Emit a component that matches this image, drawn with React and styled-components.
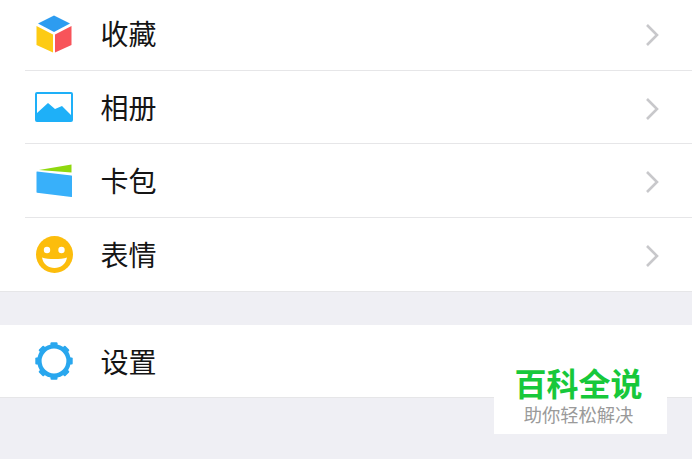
import React from 'react'
import styled, { createGlobalStyle } from 'styled-components'

const GlobalStyle = createGlobalStyle`
  html, body {
    margin: 0;
    padding: 0;
    background: #efeff4;
  }
  body {
    font-family: "Liberation Sans", "Noto Sans CJK SC", sans-serif;
  }
`

const Page = styled.div`
  position: relative;
  width: 692px;
  height: 459px;
  overflow: hidden;
  background: #efeff4;
`

const Group = styled.div`
  background: #fff;
  margin-top: ${(p) => p.$top || 0}px;
  border-bottom: 1px solid #e6e6e8;
`

const Row = styled.div`
  display: flex;
  align-items: center;
  height: ${(p) => p.$height}px;
  margin-left: 25px;
  box-sizing: border-box;
  border-bottom: ${(p) => (p.$last ? 'none' : '1px solid #e6e6e8')};
`

const IconBox = styled.div`
  width: 58px;
  height: 44px;
  display: flex;
  align-items: center;
  justify-content: center;
  flex-shrink: 0;
`

const Label = styled.span`
  margin-left: 17.5px;
  margin-top: 5px;
  font-size: 28px;
  line-height: 40px;
  color: #151515;
  flex: 1;
`

const Arrow = styled.svg`
  width: 16px;
  height: 26px;
  margin-top: 3px;
  margin-right: 32px;
`

const Watermark = styled.div`
  position: absolute;
  left: 494px;
  top: 365px;
  width: 173px;
  height: 69px;
  padding-right: 4px;
  box-sizing: border-box;
  background: #fff;
  display: flex;
  flex-direction: column;
  align-items: center;
`

const MarkTitle = styled.div`
  margin-top: 2px;
  font-size: 32px;
  line-height: 37px;
  font-weight: 700;
  color: #17c83a;
`

const MarkSub = styled.div`
  font-size: 18.3px;
  line-height: 24px;
  color: #9a9a9a;
`

const Chevron = () => (
  <Arrow viewBox="0 0 16 26">
    <path d="M3 3l10 10L3 23" fill="none" stroke="#c8c8cb" strokeWidth="2.6" />
  </Arrow>
)

const BoxIcon = () => (
  <svg width="36" height="38" viewBox="0 0 36 38">
    <path d="M18 0.500L34 8.500L18 17L2 8.500Z" fill="#2d9cf0" />
    <path d="M0.500 11L17 19.500V37.500L0.500 30Z" fill="#fdcb14" />
    <path d="M35.500 11L19 19.500V37.500L35.500 30Z" fill="#f8545a" />
  </svg>
)

const PictureIcon = () => (
  <svg width="38" height="30" viewBox="0 0 38 30">
    <rect x="1" y="1" width="36" height="28" rx="1" fill="#fff" stroke="#1eb0f8" strokeWidth="2" />
    <path d="M2 21L13 11L20 17L27 14L36 23V29H2Z" fill="#1eb0f8" />
  </svg>
)

const WalletIcon = () => (
  <svg width="37" height="34" viewBox="0 0 37 34">
    <path d="M3 6L35.500 0.500V8.500Z" fill="#8fd80e" />
    <path d="M1 7.500L35.500 11.500Q36 11.600 36 12V32.500Q36 33.200 35.300 33.100L1 28.700Q0.500 28.600 0.500 28V8Q0.500 7.400 1 7.500Z" fill="#38b0fa" />
  </svg>
)

const SmileIcon = () => (
  <svg width="37" height="37" viewBox="0 0 37 37">
    <circle cx="18.500" cy="18.500" r="18.500" fill="#fcbd0c" />
    <circle cx="11" cy="14" r="3.200" fill="#fff" />
    <circle cx="25.500" cy="14" r="3.200" fill="#fff" />
    <path d="M6 21.500C12 23.500 25 23.500 31 21.500C30 28 24.500 32 18.500 32C12.500 32 7 28 6 21.500Z" fill="#fff" />
  </svg>
)

const GearIcon = () => (
  <svg width="38" height="38" viewBox="0 0 38 38">
    <circle cx="19" cy="19" r="14.600" fill="none" stroke="#29a7ee" strokeWidth="4.400" />
    {[0, 45, 90, 135, 180, 225, 270, 315].map((deg) => (
      <rect key={deg} x="15.500" y="0.300" width="7" height="5" rx="1" fill="#29a7ee" transform={`rotate(${deg} 19 19)`} />
    ))}
  </svg>
)

const items = [
  { label: '收藏', icon: <BoxIcon />, height: 74 },
  { label: '相册', icon: <PictureIcon />, height: 73 },
  { label: '卡包', icon: <WalletIcon />, height: 74 },
  { label: '表情', icon: <SmileIcon />, height: 73, last: true },
]

function App() {
  return (
    <Page>
      <GlobalStyle />
      <Group $top={-3}>
        {items.map((item) => (
          <Row key={item.label} $height={item.height} $last={item.last}>
            <IconBox>{item.icon}</IconBox>
            <Label>{item.label}</Label>
            <Chevron />
          </Row>
        ))}
      </Group>
      <Group $top={33}>
        <Row $height={72} $last>
          <IconBox>
            <GearIcon />
          </IconBox>
          <Label>设置</Label>
        </Row>
      </Group>
      <Watermark>
        <MarkTitle>百科全说</MarkTitle>
        <MarkSub>助你轻松解决</MarkSub>
      </Watermark>
    </Page>
  )
}

export default App
